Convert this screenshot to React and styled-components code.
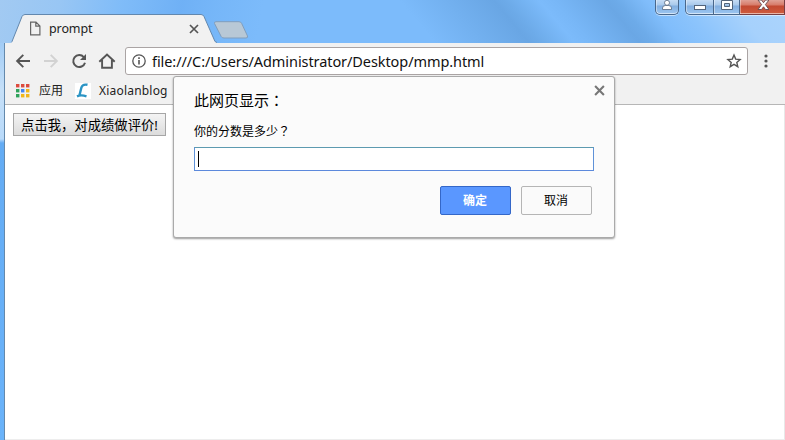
import React from "react";
import styled, { createGlobalStyle } from "styled-components";

const Global = createGlobalStyle`
  *{box-sizing:border-box}
  html,body{margin:0;padding:0;overflow:hidden}
  body{font-family:"Noto Sans","Noto Sans CJK SC",sans-serif;color:#000}
  svg{display:block;flex:none}
`;

const Desktop = styled.div`
  width:785px;height:440px;display:flex;flex-direction:column;overflow:hidden;position:relative;
  background:linear-gradient(180deg,#9ac8f5 0,#a3cdf6 45px,#c6e0f8 90px,#b9dafa 139px,#64acf4 143px,#6ab3fa 100%);
`;
const TitleBar = styled.header`
  height:43px;flex:none;display:flex;align-items:flex-end;position:relative;
  background:
    linear-gradient(100deg,#a2caf2 0,#98c6f4 60px,rgba(128,188,248,.9) 120px,rgba(108,174,244,.8) 180px,rgba(112,178,246,.5) 215px,transparent 260px),
    linear-gradient(50deg,#7cbbfb 0,#7cbbfb 53%,#69a6e4 64.5%,#6dabe9 66%,#7cbbfb 70%,#78b7f7 72%,#6aa7e5 78%,#6dabe9 79.5%,#80bdfb 83%,#8cc4fc 87%,#a6d1fc 93%,#acd4fc 100%);
`;
const Tab = styled.div`
  width:206px;height:29px;margin-left:11px;padding:0 18px 0 18px;display:flex;align-items:center;
  position:relative;font-size:12.5px;z-index:1;
`;
const TabShape = styled.svg`position:absolute;left:0;top:0;`;
const TabTitle = styled.span`
  position:relative;flex:1;margin-left:8px;padding-top:1px;line-height:18px;letter-spacing:-.1px;color:#222;
`;
const Above = styled.span`position:relative;display:block;`;
const NewTab = styled.svg`margin:0 0 4px -4px;`;
const Controls = styled.div`
  margin-left:auto;align-self:flex-start;display:flex;height:15px;
`;
const Control = styled.div`
  width:${p => p.$w}px;height:15px;display:flex;align-items:flex-start;justify-content:center;
  border:1px solid ${p => p.$close ? "#783e42" : "#49678b"};border-top:0;
  border-left-width:${p => p.$joined ? 0 : 1}px;
  border-radius:${p => p.$radius || "0"};
  margin-right:${p => p.$gap || 0}px;
  background:${p => p.$close
    ? "linear-gradient(#e0a196 0,#d77b69 5px,#c34932 6px,#cf5c3e 100%)"
    : "linear-gradient(#c5dcf5 0,#a9c9eb 5px,#83afe0 6px,#9cc6f1 100%)"};
  box-shadow:inset 0 -1px rgba(255,255,255,.55),inset 1px 0 rgba(255,255,255,.4),0 1px rgba(255,255,255,.5);
`;
const Window = styled.div`
  flex:1;margin-left:4px;border-left:1px solid #6489ac;display:flex;flex-direction:column;background:#fff;
  min-height:0;
`;
const Toolbar = styled.div`
  height:37px;flex:none;display:flex;align-items:center;background:#f1f1f1;padding:0 9px 0 8px;
  margin-top:-1px;border-top:1px solid #668cb5;
`;
const NavIcon = styled.div`
  width:20px;margin-right:8px;display:flex;justify-content:center;
`;
const Address = styled.div`
  width:623px;height:28px;border:1px solid #aaa4a4;border-radius:3px;background:#fff;
  display:flex;align-items:center;padding:0 5px;font-size:14.5px;line-height:24px;color:#111;
`;
const Url = styled.span`flex:1;margin-left:5px;padding-bottom:1px;letter-spacing:-.08px;`;
const MenuIcon = styled.div`margin-left:15px;`;
const Bookmarks = styled.div`
  height:26px;flex:none;background:#f1f1f1;border-bottom:1px solid #b6b6b6;
  display:flex;align-items:center;padding:0 0 2px 11px;font-size:12px;line-height:20px;color:#222;
`;
const Bookmark = styled.div`
  display:flex;align-items:center;gap:${p => p.$gap}px;margin-right:12px;letter-spacing:${p => p.$spacing || 0}px;
`;
const BookmarkLabel = styled.span`padding-top:1px;`;
const Page = styled.main`
  flex:1;padding:8px;border-bottom:1px solid #ededed;border-right:1px solid #e8e8e8;
`;
const PageButton = styled.button`
  display:block;width:153px;height:23px;padding:0;border:1px solid #a6a6a6;border-radius:0;
  background:linear-gradient(#f4f4f4,#dcdcdc);font:13.33px/20px "Noto Sans","Noto Sans CJK SC",sans-serif;
  color:#000;white-space:nowrap;
`;
const Dialog = styled.section`
  position:absolute;left:173px;top:76px;width:442px;height:162px;z-index:2;
  background:#fbfbfb;border:1px solid #aaa;border-radius:3px;box-shadow:0 1px 2px rgba(0,0,0,.4);
  padding:12px 20px 0;display:flex;flex-direction:column;
`;
const DialogHead = styled.div`display:flex;justify-content:space-between;height:33px;margin-right:-11px;`;
const Heading = styled.h1`margin:0;font-size:15px;line-height:22px;font-weight:400;`;
const WideMark = styled.span`
  display:inline-block;width:1em;line-height:1;font-family:"Noto Sans CJK TC",sans-serif;
`;
const Close = styled.div`margin-top:-4px;`;
const Message = styled.p`margin:0;font-size:12px;line-height:20px;height:25px;`;
const Field = styled.div`
  height:24px;border:1px solid #6393d4;border-color:#5d9ab0 #5f92d8 #5c89dc;background:#fff;padding:3px;
  width:400px;display:flex;
`;
const Caret = styled.span`width:1px;height:16px;background:#000;`;
const Actions = styled.div`display:flex;justify-content:flex-end;gap:10px;margin:15px 2px 0 0;`;
const Action = styled.button`
  width:71px;height:29px;padding:1px 1px 0 0;border-radius:2px;
  border:1px solid ${p => p.$primary ? "#3467c8" : "#b5b5b5"};
  background:${p => p.$primary ? "#5a97ff" : "#fafafa"};
  color:${p => p.$primary ? "#fff" : "#000"};
  font:${p => p.$primary ? 700 : 400} 12px/20px "Noto Sans","Noto Sans CJK SC",sans-serif;
`;

const Cross = ({ size, w, color }) => (
  <svg width={size} height={size} viewBox="0 0 10 10">
    <path d="M1 1L9 9M9 1L1 9" stroke={color} strokeWidth={w} />
  </svg>
);

const appColors = ["#dd4b3e", "#dd4b3e", "#dd4b3e", "#2fa35b", "#4285f4", "#f0b61c", "#2fa35b", "#f0b61c", "#f0b61c"];

export default function App() {
  return (
    <>
      <Global />
      <Desktop>
        <TitleBar>
          <Tab>
            <TabShape width="206" height="29" viewBox="0 0 206 29">
              <path d="M0 29L1 27.5L11 2.5Q12 .5 14 .5H190Q192 .5 193 2.5L204 27.5L206 29Z" fill="#f1f1f1" />
              <path d="M0 28.5L1 27.5L11 2.5Q12 .5 14 .5H190Q192 .5 193 2.5L204 27.5L206 28.5" fill="none" stroke="#6388ae" />
            </TabShape>
            <Above>
              <svg width="12" height="15" viewBox="0 0 12 15" fill="none" stroke="#666" strokeWidth="1.2">
                <path d="M1.6 1.1H7L10.9 5V13.9H1.6ZM6.8 1.1V5.2H10.9" />
              </svg>
            </Above>
            <TabTitle>prompt</TabTitle>
            <Above><Cross size={10} w={1.7} color="#555" /></Above>
          </Tab>
          <NewTab width="36" height="18" viewBox="0 0 36 18">
            <path d="M3 .7H26Q28 .7 28.7 2.5L34.5 15Q35 17 33 17H11Q9 17 8.2 15.5L1.5 2.5Q.8.9 3 .7Z" fill="#b8c8d6" stroke="#819ebd" />
          </NewTab>
          <Controls>
            <Control $w={24} $gap={6} $radius="0 0 5px 5px">
              <svg width="12" height="11" viewBox="0 0 12 11" fill="#fff" stroke="#56677d" strokeWidth=".8">
                <path d="M1.5 9.5V8Q1.5 5.5 4.5 5.5H7.5Q10.5 5.5 10.5 8V9.5Z" />
                <circle cx="6" cy="2.8" r="2.5" />
              </svg>
            </Control>
            <Control $w={29} $radius="0 0 0 5px">
              <svg width="14" height="11" viewBox="0 0 14 11"><rect x="1.5" y="5.5" width="11" height="4" fill="#fff" stroke="#53647b" /></svg>
            </Control>
            <Control $w={26} $joined>
              <svg width="12" height="11" viewBox="0 0 12 11">
                <path d="M.5 .5H11.5V9.5H.5ZM3.5 3.5V6.5H8.5V3.5Z" fill="#fff" fillRule="evenodd" stroke="#53647b" />
              </svg>
            </Control>
            <Control $w={45} $joined $close>
              <svg width="13" height="11" viewBox="0 0 13 11">
                <path d="M1 0H4.5L6.5 2.7L8.5 0H12L8.4 4.6L12 9.5H8.5L6.5 6.8L4.5 9.5H1L4.6 4.6Z" transform="translate(1 0)" fill="#fff" stroke="#66474d" strokeWidth=".9" />
              </svg>
            </Control>
          </Controls>
        </TitleBar>
        <Window>
          <Toolbar>
            <NavIcon>
              <svg width="16" height="16" viewBox="0 0 16 16" fill="none" stroke="#555" strokeWidth="1.9"><path d="M15 8H2.5M8.3 1.8L2.1 8L8.3 14.2" /></svg>
            </NavIcon>
            <NavIcon>
              <svg width="16" height="16" viewBox="0 0 16 16" fill="none" stroke="#d2d2d2" strokeWidth="1.9"><path d="M1 8H13.5M7.7 1.8L13.9 8L7.7 14.2" /></svg>
            </NavIcon>
            <NavIcon>
              <svg width="16" height="16" viewBox="0 0 16 16">
                <path d="M12.8 4.1A6 6 0 1 0 14 9.7" fill="none" stroke="#555" strokeWidth="2" />
                <path d="M15 1V7H9Z" fill="#555" />
              </svg>
            </NavIcon>
            <NavIcon>
              <svg width="18" height="16" viewBox="0 0 18 16" fill="none" stroke="#555" strokeWidth="1.9"><path d="M1.3 8.8L9 1.5L16.7 8.8M4.1 7V14.8H13.9V7" /></svg>
            </NavIcon>
            <Address>
              <svg width="16" height="16" viewBox="0 0 16 16"><circle cx="8" cy="8" r="6.2" fill="none" stroke="#555" strokeWidth="1.3" /><path d="M7.2 7H8.8V11.5H7.2ZM7.2 4.3H8.8V5.9H7.2Z" fill="#555" /></svg>
              <Url>file:///C:/Users/Administrator/Desktop/mmp.html</Url>
              <svg width="16" height="16" viewBox="0 0 16 16"><path d="M8 2L9.7 6.1L14.1 6.5L10.8 9.4L11.8 13.7L8 11.4L4.2 13.7L5.2 9.4L1.9 6.5L6.3 6.1Z" fill="none" stroke="#555" strokeWidth="1.4" /></svg>
            </Address>
            <MenuIcon>
              <svg width="6" height="16" viewBox="0 0 6 16" fill="#555"><circle cx="3" cy="3" r="1.6" /><circle cx="3" cy="8" r="1.6" /><circle cx="3" cy="13" r="1.6" /></svg>
            </MenuIcon>
          </Toolbar>
          <Bookmarks>
            <Bookmark $gap={9}>
              <svg width="14" height="14" viewBox="0 0 14 14">
                {appColors.map((c, i) => <rect key={i} x={(i % 3) * 5} y={Math.floor(i / 3) * 5} width="3.4" height="3.4" fill={c} />)}
              </svg>
              <BookmarkLabel>应用</BookmarkLabel>
            </Bookmark>
            <Bookmark $gap={8} $spacing={0.2}>
              <svg width="16" height="16" viewBox="0 0 16 16">
                <rect width="16" height="16" fill="#fff" />
                <path d="M12.5 1.8Q7.5.8 6.4 4.5L4.4 12.5M2 13.3Q6 11.5 11.5 13.3" fill="none" stroke="#2b94c4" strokeWidth="2.4" />
              </svg>
              <BookmarkLabel>Xiaolanblog</BookmarkLabel>
            </Bookmark>
          </Bookmarks>
          <Page><PageButton>点击我，对成绩做评价!</PageButton></Page>
        </Window>
        <Dialog>
          <DialogHead>
            <Heading>此网页显示<WideMark lang="zh-TW">：</WideMark></Heading>
            <Close><Cross size={11} w={1.9} color="#777" /></Close>
          </DialogHead>
          <Message>你的分数是多少<WideMark lang="zh-TW">？</WideMark></Message>
          <Field><Caret /></Field>
          <Actions>
            <Action $primary>确定</Action>
            <Action>取消</Action>
          </Actions>
        </Dialog>
      </Desktop>
    </>
  );
}
